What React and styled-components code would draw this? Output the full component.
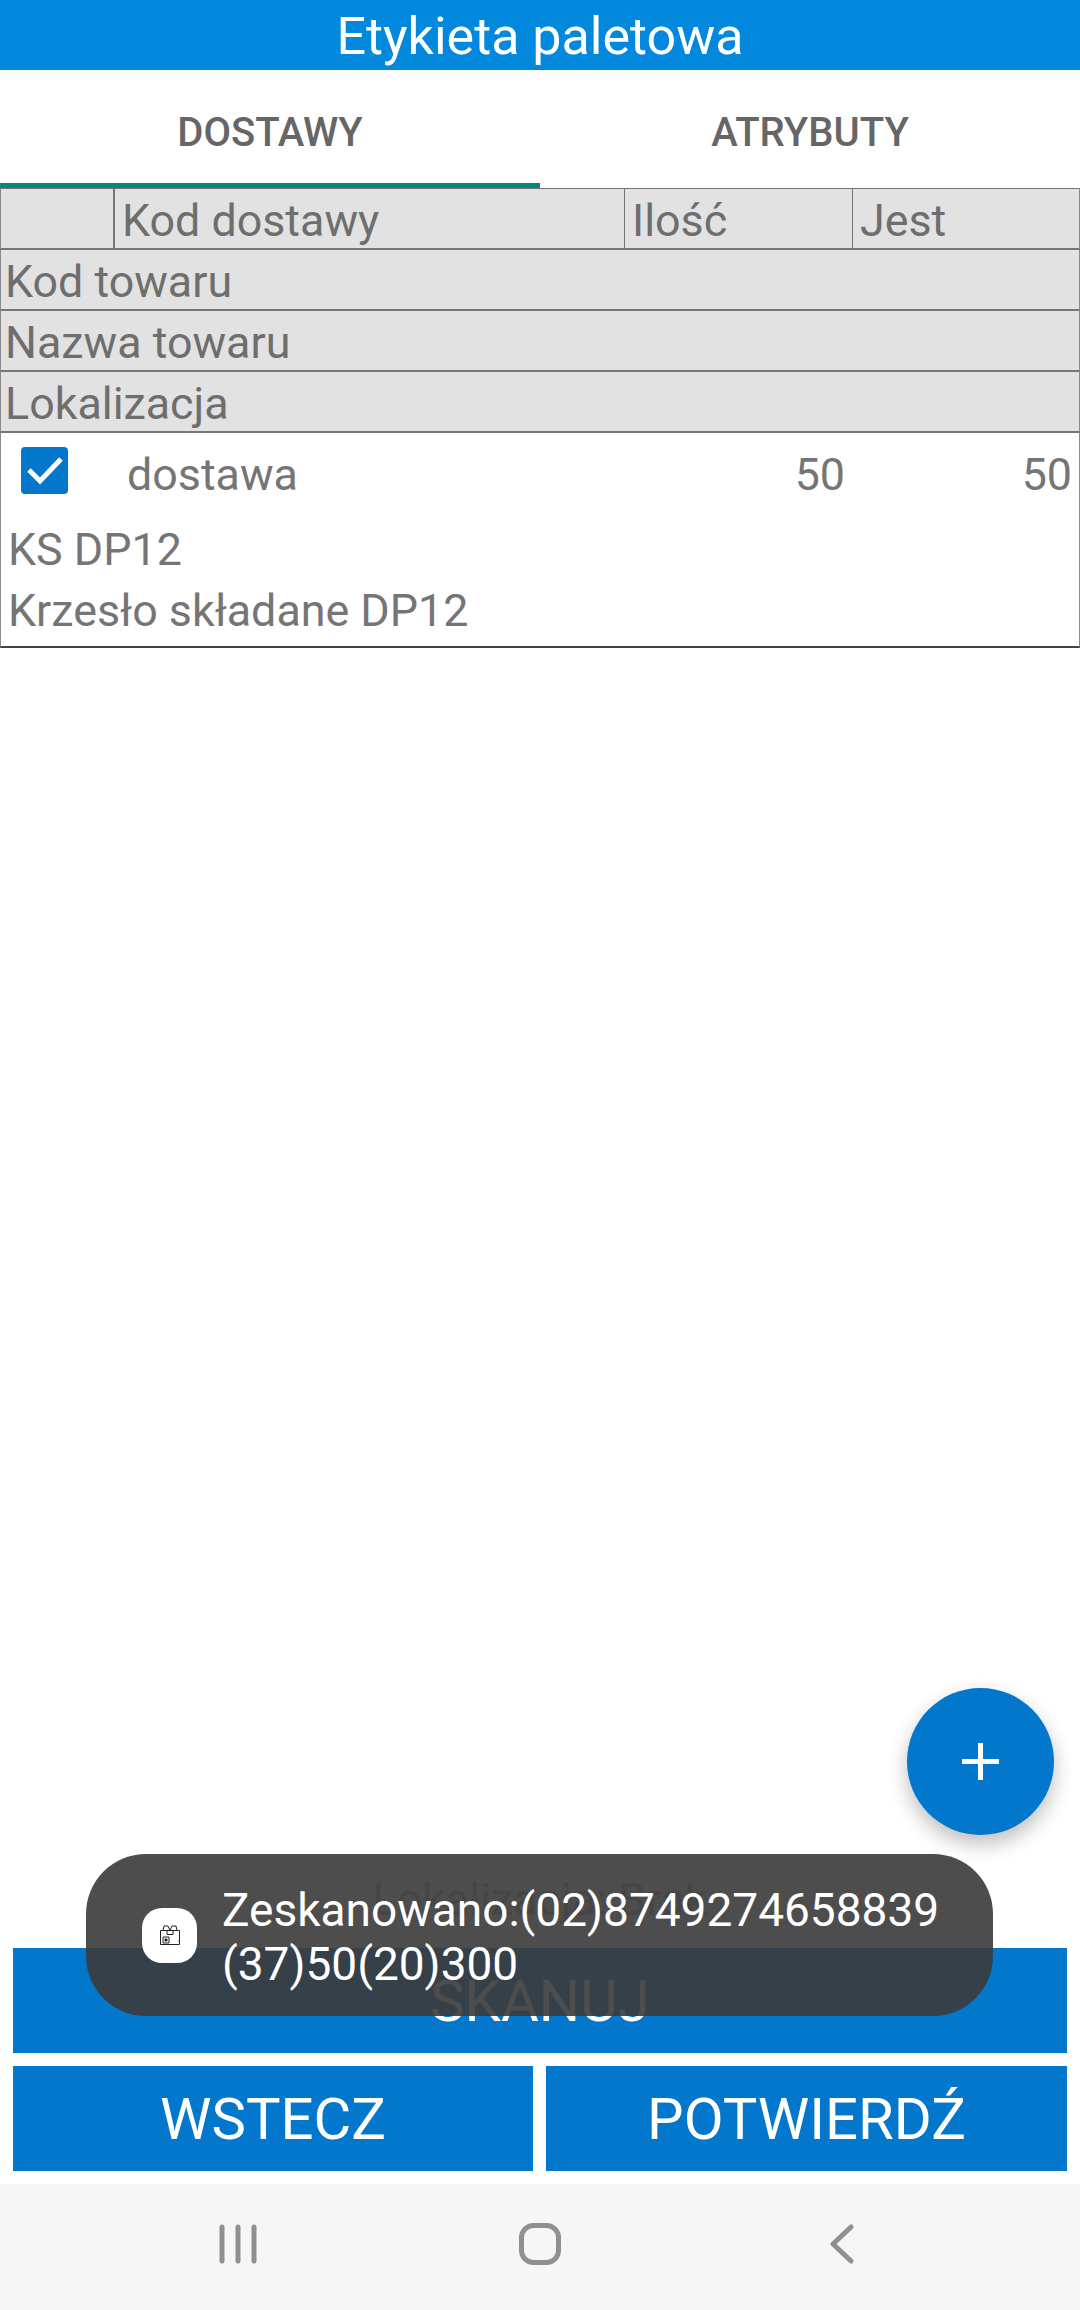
import styled, { createGlobalStyle } from "styled-components";

const GlobalStyle = createGlobalStyle`
  html, body {
    margin: 0;
    padding: 0;
    background: #fff;
  }
  * {
    box-sizing: border-box;
  }
`;

const Screen = styled.div`
  position: relative;
  width: 1080px;
  height: 2310px;
  display: flex;
  flex-direction: column;
  overflow: hidden;
  background: #fff;
  font-family: Roboto, "Noto Sans", sans-serif;
  color: #757575;
`;

const TitleBar = styled.header`
  height: 70px;
  flex: none;
  display: flex;
  align-items: center;
  justify-content: center;
  padding-top: 2px;
  background: #0288dc;
  color: #fff;
  font-size: 52px;
`;

const Tabs = styled.nav`
  height: 118px;
  flex: none;
  display: flex;
`;

const Tab = styled.div`
  flex: 1;
  display: flex;
  align-items: center;
  justify-content: center;
  padding-top: 12px;
  font-size: 40px;
  font-weight: 500;
  color: #666;
  border-bottom: 5px solid ${(p) => (p.$active ? "#00897b" : "transparent")};
`;

const Table = styled.section`
  flex: 1;
  min-height: 0;
`;

const HeadRow = styled.div`
  height: ${(p) => (p.$first ? "62px" : "61px")};
  display: grid;
  grid-template-columns: ${(p) => (p.$columns ? "112px 511px 228px 1fr" : "1fr")};
  background: #e2e2e2;
  border: 1px solid #8a8a8a;
  border-bottom: 2px solid #757575;
  border-top: ${(p) => (p.$first ? "1px solid #757575" : "none")};
  font-size: 44.8px;
  line-height: 58px;
  color: #6e6e6e;
`;

const HeadCell = styled.div`
  padding-top: 3px;
  padding-left: ${(p) => (p.$columns ? "7px" : "4px")};
  border-left: ${(p) => (p.$divider ? `${p.$divider}px solid #757575` : "none")};
`;

const DataRow = styled.article`
  height: 215px;
  border: 1px solid #8a8a8a;
  border-top: none;
  border-bottom: 2px solid #444;
  font-size: 44.8px;
`;

const DataTop = styled.div`
  height: 86px;
  padding-bottom: 4px;
  display: grid;
  grid-template-columns: 112px 511px 228px 1fr;
  align-items: center;
`;

const CheckBox = styled.span`
  width: 47px;
  height: 47px;
  margin: 14px 0 0 20px;
  align-self: start;
  display: block;
  border-radius: 4px;
  background: #0277cc;
`;

const CodeCell = styled.div`
  padding-left: 14px;
`;

const NumberCell = styled.div`
  text-align: right;
  padding-right: 7px;
`;

const DataLine = styled.div`
  height: 61px;
  line-height: 61px;
  padding-left: 7px;
`;

const Hint = styled.div`
  height: 60px;
  flex: none;
  margin-top: -16px;
  margin-bottom: 16px;
  text-align: center;
  font-size: 44.8px;
  line-height: 56px;
  color: #aaa;
`;

const Buttons = styled.div`
  flex: none;
  display: grid;
  grid-template-columns: 520px 521px;
  gap: 13px;
  padding: 0 13px 13px;
`;

const ActionButton = styled.button`
  height: 105px;
  grid-column: ${(p) => (p.$wide ? "1 / -1" : "auto")};
  border: none;
  background: #0277cc;
  color: #fff;
  font-family: inherit;
  font-size: 58px;
`;

const NavBar = styled.footer`
  height: 126px;
  flex: none;
  display: grid;
  grid-template-columns: repeat(3, 1fr);
  align-items: center;
  justify-items: center;
  padding: 0 87px 6px;
  background: #f6f6f6;
  color: #909090;
`;

const Fab = styled.button`
  position: absolute;
  left: 907px;
  top: 1688px;
  width: 147px;
  height: 147px;
  display: flex;
  align-items: center;
  justify-content: center;
  padding: 0;
  border: none;
  border-radius: 50%;
  background: #0277cc;
  color: #fff;
  box-shadow: 0 9px 20px rgba(0, 0, 0, 0.26);
`;

const Toast = styled.div`
  position: absolute;
  left: 86px;
  top: 1854px;
  width: 907px;
  height: 162px;
  display: flex;
  align-items: center;
  gap: 25px;
  padding: 3px 0 0 56px;
  border-radius: 60px;
  background: rgba(59, 59, 59, 0.905);
  color: #fff;
  font-size: 46px;
  line-height: 54px;
`;

const ToastIcon = styled.span`
  width: 55px;
  height: 55px;
  margin-top: -3px;
  flex: none;
  display: flex;
  align-items: center;
  justify-content: center;
  border-radius: 20px;
  background: #fff;
`;

const App = () => {
  return (
    <Screen>
      <GlobalStyle />
      <TitleBar>Etykieta paletowa</TitleBar>
      <Tabs>
        <Tab $active>DOSTAWY</Tab>
        <Tab>ATRYBUTY</Tab>
      </Tabs>
      <Table>
        <HeadRow $columns $first>
          <HeadCell $columns />
          <HeadCell $columns $divider={2}>Kod dostawy</HeadCell>
          <HeadCell $columns $divider={1}>Ilość</HeadCell>
          <HeadCell $columns $divider={1}>Jest</HeadCell>
        </HeadRow>
        <HeadRow><HeadCell>Kod towaru</HeadCell></HeadRow>
        <HeadRow><HeadCell>Nazwa towaru</HeadCell></HeadRow>
        <HeadRow><HeadCell>Lokalizacja</HeadCell></HeadRow>
        <DataRow>
          <DataTop>
            <CheckBox>
              <svg width="47" height="47" viewBox="0 0 47 47" fill="none" stroke="#fff" strokeWidth="5">
                <path d="M8 23l11 11L40 12" />
              </svg>
            </CheckBox>
            <CodeCell>dostawa</CodeCell>
            <NumberCell>50</NumberCell>
            <NumberCell>50</NumberCell>
          </DataTop>
          <DataLine>KS DP12</DataLine>
          <DataLine>Krzesło składane DP12</DataLine>
        </DataRow>
      </Table>
      <Hint>Lokalizacja: Brak</Hint>
      <Buttons>
        <ActionButton $wide>SKANUJ</ActionButton>
        <ActionButton>WSTECZ</ActionButton>
        <ActionButton>POTWIERDŹ</ActionButton>
      </Buttons>
      <NavBar>
        {/* pasek nawigacji androida */}
        <svg width="38" height="40" viewBox="0 0 38 40" fill="none" stroke="currentColor" strokeWidth="5" strokeLinecap="round">
          <path d="M3 3v34M19 3v34M35 3v34" />
        </svg>
        <svg width="42" height="42" viewBox="0 0 42 42" fill="none" stroke="currentColor" strokeWidth="5">
          <rect x="2.5" y="2.5" width="37" height="37" rx="12" />
        </svg>
        <svg width="24" height="40" viewBox="0 0 24 40" fill="none" stroke="currentColor" strokeWidth="5" strokeLinecap="round" strokeLinejoin="round">
          <path d="M21 3L3 20l18 17" />
        </svg>
      </NavBar>
      <Fab>
        <svg width="37" height="37" viewBox="0 0 37 37" fill="none" stroke="currentColor" strokeWidth="5">
          <path d="M18.5 0v37M0 18.5h37" />
        </svg>
      </Fab>
      <Toast>
        <ToastIcon>
          <svg width="22" height="22" viewBox="0 0 22 22" fill="none" stroke="#222" strokeWidth="1">
            <path d="M1.5 6.5h19v14h-19zM4 6.5L5 2h4l2 4.5M18 6.5L17 2h-4l-2 4.5M8 6.5v4h6v-4" />
            <path d="M4 13h6v6H4z" />
            <path d="M6 15h2v2H6z" fill="#222" />
            <path d="M18.5 17h2" stroke="#2ecc40" />
          </svg>
        </ToastIcon>
        <div>Zeskanowano:(02)8749274658839<br />(37)50(20)300</div>
      </Toast>
    </Screen>
  );
};

export default App;
